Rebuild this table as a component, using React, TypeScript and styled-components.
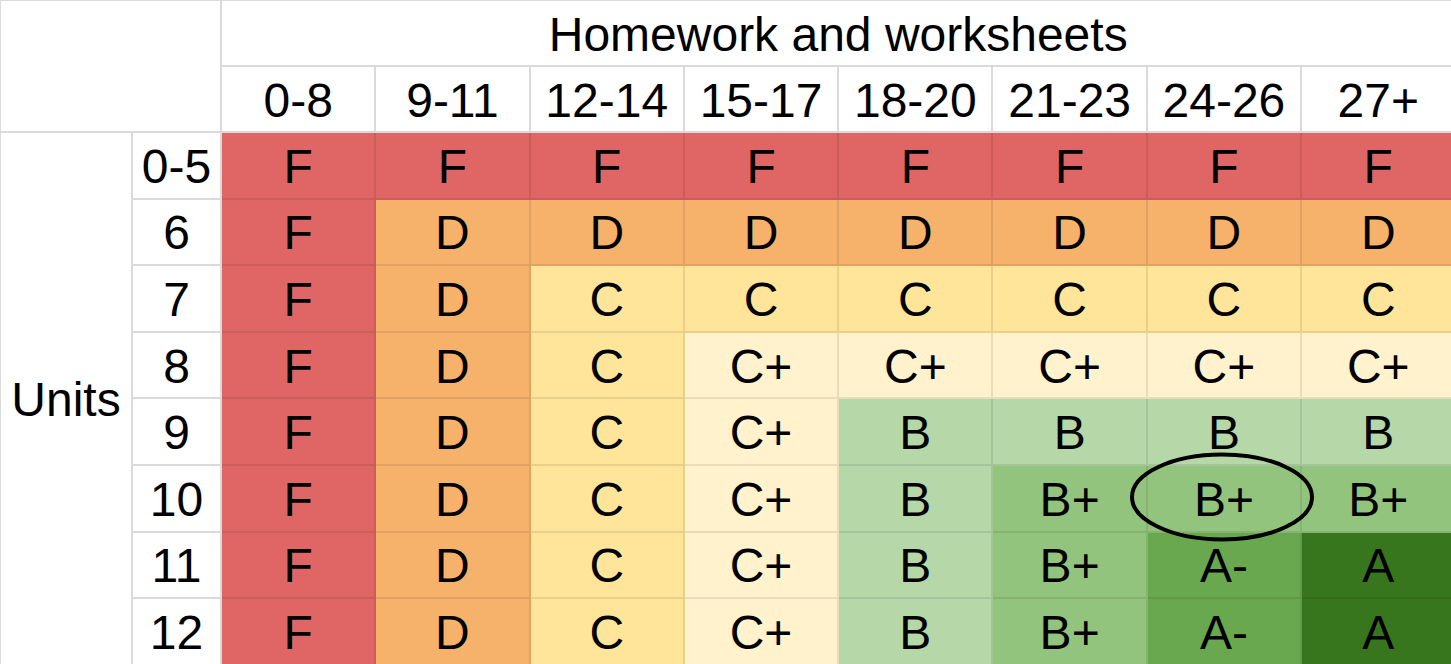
import React from "react";
import styled, { createGlobalStyle } from "styled-components";

const Global = createGlobalStyle`
  html, body { margin: 0; padding: 0; background: #ffffff; overflow: hidden; }
  body { font-family: "Liberation Sans", Arial, sans-serif; }
`;

const Wrap = styled.div`
  position: relative;
  width: 1460px;
`;

const Grid = styled.div`
  display: grid;
  grid-template-columns: 132px 89px repeat(8, 154.3px);
  grid-template-rows: 66px 66px repeat(8, 66.6px);
  border-top: 2px solid #dadada;
  border-left: 2px solid #dadada;
  box-sizing: border-box;
  margin-top: -1px;
  margin-left: -1px;
  width: max-content;
`;

type CellProps = { $bg?: string; $line?: string; $col?: string; $row?: string };

const Cell = styled.div<CellProps>`
  box-sizing: border-box;
  display: flex;
  align-items: center;
  justify-content: center;
  font-size: 48px;
  color: #000000;
  background: ${(p) => p.$bg ?? "#ffffff"};
  border-right: 2px solid ${(p) => p.$line ?? "#dadada"};
  border-bottom: 2px solid ${(p) => p.$line ?? "#dadada"};
  grid-column: ${(p) => p.$col ?? "auto"};
  grid-row: ${(p) => p.$row ?? "auto"};
  white-space: nowrap;
  padding-top: 2px;
`;

const Ring = styled.svg`
  position: absolute;
  left: 1128px;
  top: 452px;
  width: 188px;
  height: 94px;
  pointer-events: none;
  overflow: visible;
`;

const palette: Record<string, { bg: string; line: string }> = {
  F: { bg: "#e06666", line: "#cc5d5d" },
  D: { bg: "#f6b26b", line: "#e0a262" },
  C: { bg: "#ffe599", line: "#e8d08b" },
  "C+": { bg: "#fff2cc", line: "#e8dcba" },
  B: { bg: "#b6d7a8", line: "#a6c499" },
  "B+": { bg: "#93c47d", line: "#86b372" },
  "A-": { bg: "#6aa84f", line: "#619948" },
  A: { bg: "#38761d", line: "#336b1b" },
};

const cols = ["0-8", "9-11", "12-14", "15-17", "18-20", "21-23", "24-26", "27+"];

const rows: { label: string; grades: string[] }[] = [
  { label: "0-5", grades: ["F", "F", "F", "F", "F", "F", "F", "F"] },
  { label: "6", grades: ["F", "D", "D", "D", "D", "D", "D", "D"] },
  { label: "7", grades: ["F", "D", "C", "C", "C", "C", "C", "C"] },
  { label: "8", grades: ["F", "D", "C", "C+", "C+", "C+", "C+", "C+"] },
  { label: "9", grades: ["F", "D", "C", "C+", "B", "B", "B", "B"] },
  { label: "10", grades: ["F", "D", "C", "C+", "B", "B+", "B+", "B+"] },
  { label: "11", grades: ["F", "D", "C", "C+", "B", "B+", "A-", "A"] },
  { label: "12", grades: ["F", "D", "C", "C+", "B", "B+", "A-", "A"] },
];

export default function App() {
  return (
    <>
      <Global />
      <Wrap>
        <Grid>
          <Cell $col="1 / 3" $row="1 / 3" />
          <Cell $col="3 / 11" $row="1">
            Homework and worksheets
          </Cell>
          {cols.map((c) => (
            <Cell key={c} $row="2">
              {c}
            </Cell>
          ))}
          <Cell $col="1" $row="3 / 11">
            Units
          </Cell>
          {rows.map((r, ri) => (
            <React.Fragment key={r.label}>
              <Cell $col="2" $row={String(ri + 3)}>
                {r.label}
              </Cell>
              {r.grades.map((g, gi) => (
                <Cell
                  key={gi}
                  $row={String(ri + 3)}
                  $bg={palette[g].bg}
                  $line={palette[g].line}
                >
                  {g}
                </Cell>
              ))}
            </React.Fragment>
          ))}
        </Grid>
        <Ring viewBox="0 0 188 94">
          <ellipse cx="94" cy="46" rx="90" ry="42.5" fill="none" stroke="#000" strokeWidth="4" />
        </Ring>
      </Wrap>
    </>
  );
}
